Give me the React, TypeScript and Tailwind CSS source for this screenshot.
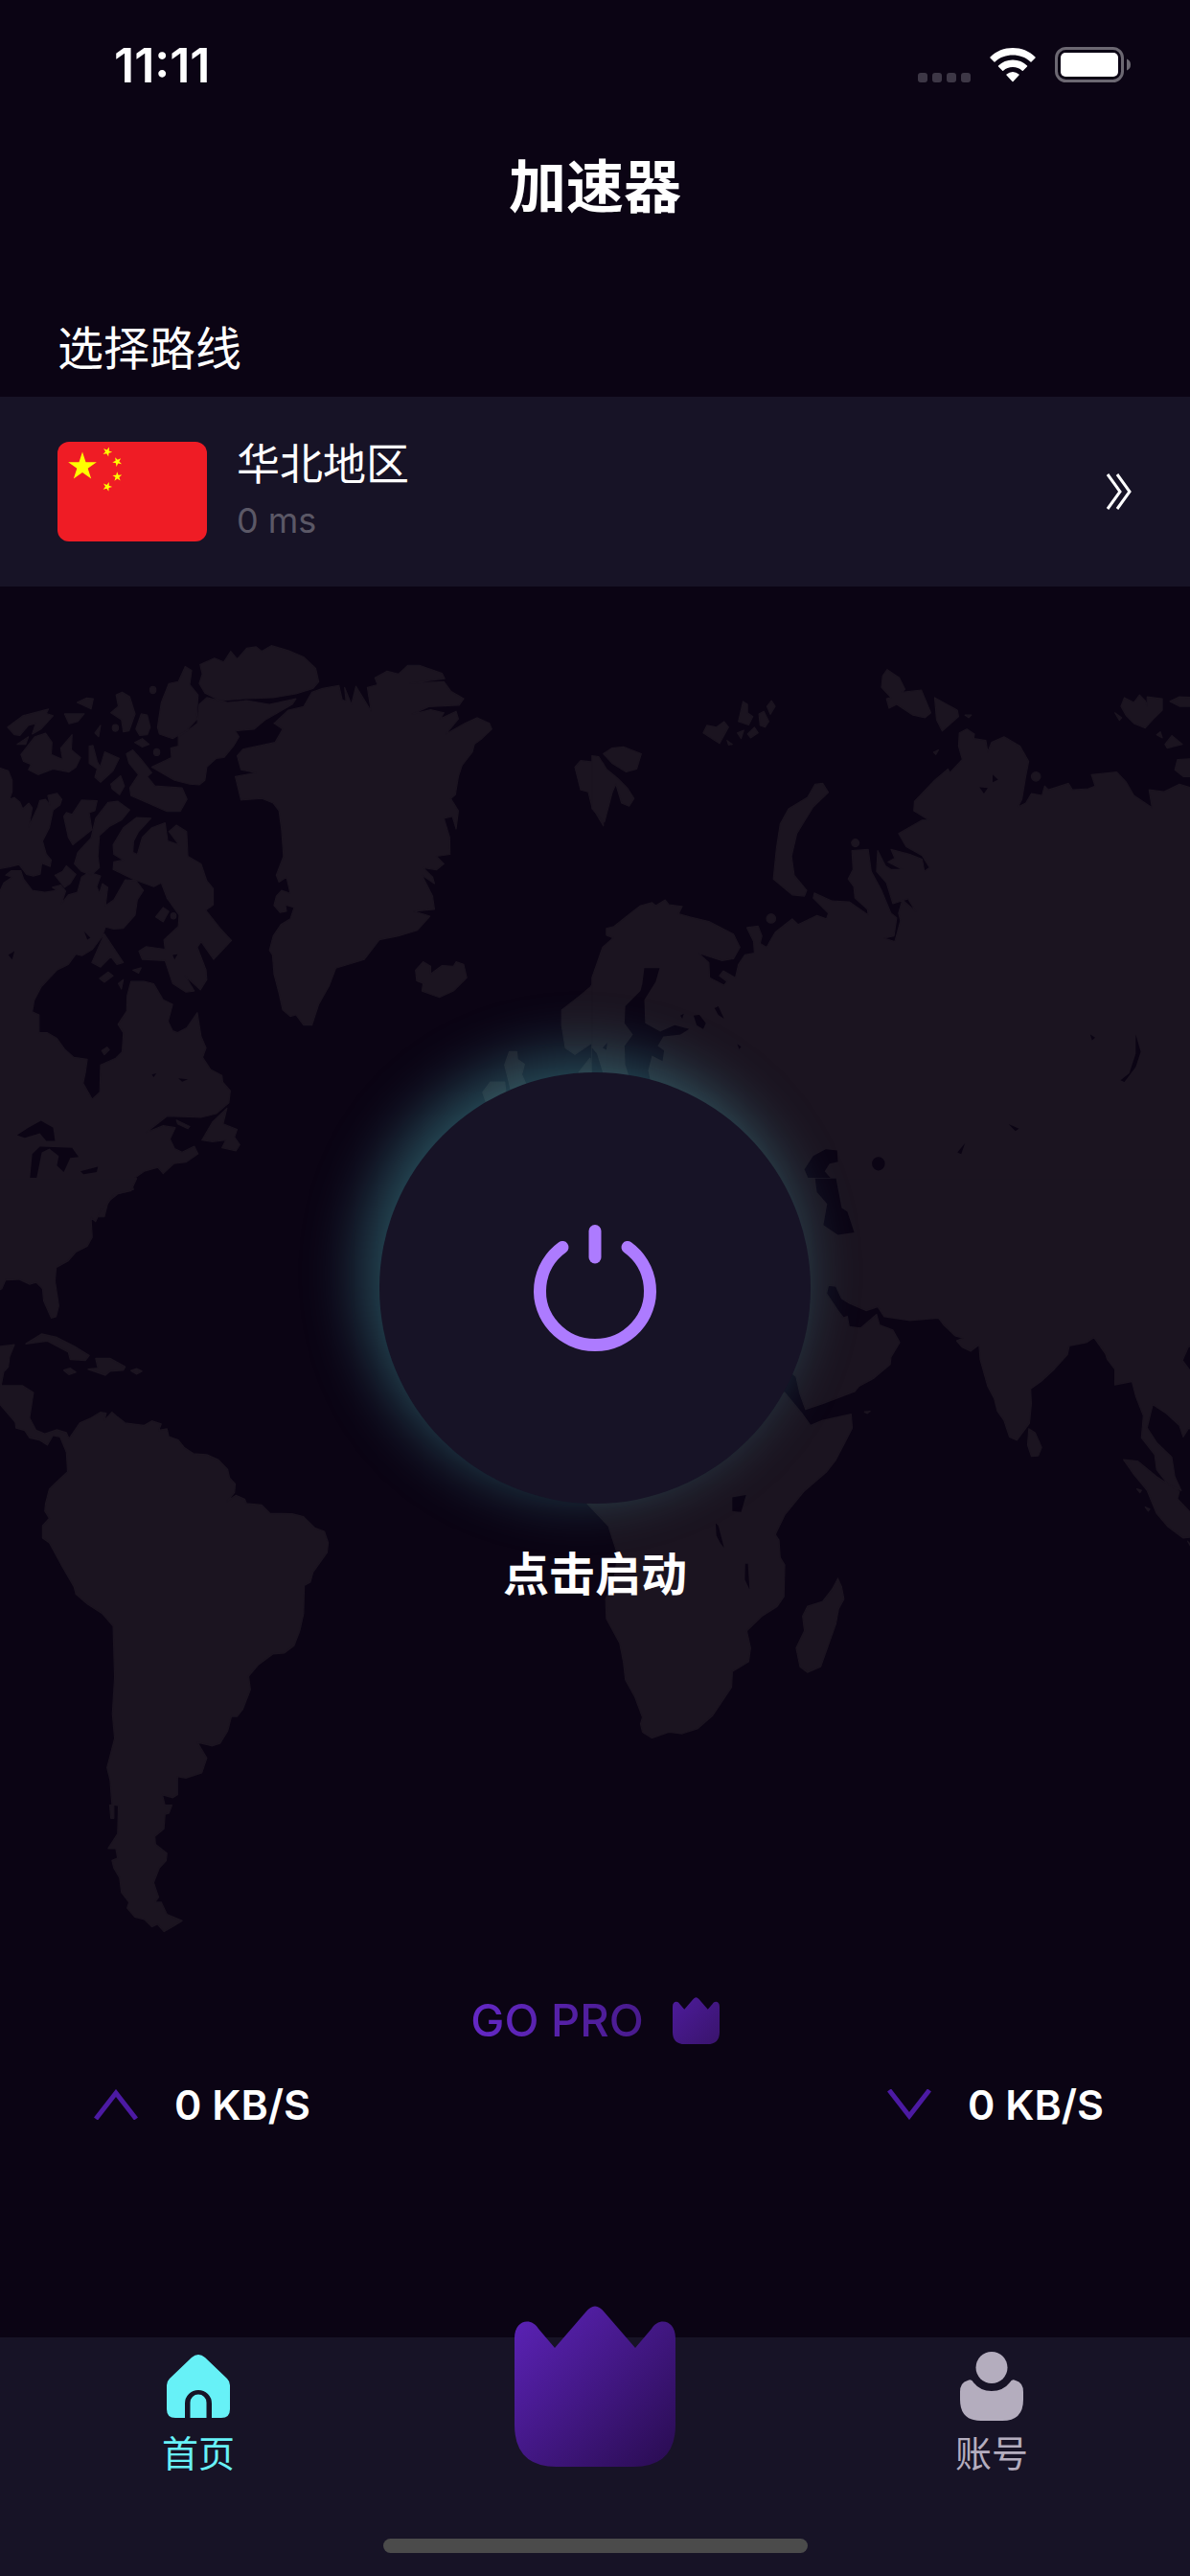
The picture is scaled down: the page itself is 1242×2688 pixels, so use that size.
import React from "react";

const LAND = "#1b1420";
const SEA = "#0b0414";

function starPoints(cx: number, cy: number, r: number, turn: number) {
  return Array.from({ length: 10 }, (_, i) => {
    const radius = i % 2 === 0 ? r : r * 0.382;
    const a = turn + (i * Math.PI) / 5;
    return `${(cx + radius * Math.sin(a)).toFixed(2)},${(cy - radius * Math.cos(a)).toFixed(2)}`;
  }).join(" ");
}

const SMALL_STARS = [
  { x: 52, y: 10.4 },
  { x: 62.4, y: 20.8 },
  { x: 62.4, y: 36.4 },
  { x: 52, y: 46.8 },
];

function Flag() {
  return (
    <svg viewBox="0 0 156 104" className="h-[104px] w-[156px] shrink-0 rounded-xl" aria-hidden="true">
      <rect width="156" height="104" fill="#ef1c25" />
      <polygon points={starPoints(26, 26, 15.6, 0)} fill="#ffff00" />
      {SMALL_STARS.map((s) => (
        <polygon
          key={s.y}
          points={starPoints(s.x, s.y, 5.2, Math.atan2(26 - s.x, s.y - 26))}
          fill="#ffff00"
        />
      ))}
    </svg>
  );
}

const NORTH_WEST_LAND = [
  "M-8 405 L22 415 32 440 32 470 25 490 38 485 52 497 60 515 76 500 85 512 76 562 100 510 105 493 120 490 132 505 126 480 150 474 163 490 158 505 140 518 130 565 112 600 122 635 135 650 132 667 110 658 106 687 88 692 70 688 50 662 25 668 -8 674Z",
  "M-8 748 L10 710 32 695 15 690 30 678 55 678 62 700 85 730 118 735 150 730 138 722 160 716 173 732 162 765 180 742 204 735 215 695 235 682 265 692 255 720 262 738 270 712 284 722 278 770 300 755 330 702 358 704 378 730 362 755 356 795 325 830 300 832 278 826 270 850 244 885 216 902 200 898 180 925 150 940 108 985 90 1020 85 1050 103 1058 103 1105 125 1105 150 1120 170 1148 195 1170 230 1175 225 1210 219 1238 243 1280 263 1262 265 1190 305 1172 322 1155 325 1105 311 1083 334 1048 335 1008 345 970 380 970 405 976 430 1018 455 1030 443 1075 455 1100 468 1105 492 1092 520 1052 530 1115 543 1145 534 1170 555 1202 585 1218 587 1235 607 1258 603 1290 570 1318 530 1328 440 1325 385 1368 430 1350 462 1355 448 1385 460 1410 480 1420 512 1404 522 1424 490 1446 458 1450 430 1476 416 1460 380 1470 352 1490 345 1500 352 1518 310 1530 285 1550 275 1590 L-8 1590Z",
  "M20 300 L60 270 128 252 122 264 140 270 108 305 85 318 94 290 75 295 52 322 38 320Z",
  "M45 345 L75 325 68 345Z",
  "M55 372 L92 325 120 316 137 340 135 372 165 385 160 355 190 320 188 360 212 380 200 405 182 418 140 410 100 425 75 412 82 398 62 390Z",
  "M170 265 L222 265 205 285 182 291Z M203 235 L228 223 246 225 240 252Z",
  "M292 262 L312 245 306 215 322 208 342 220 356 265 340 310 325 312 320 280Z",
  "M358 305 L372 265 388 268 396 300 388 320 368 322Z M355 340 L375 330 393 345 375 352Z M250 315 L265 295 260 325Z",
  "M395 202 a8 9 0 1 0 16 0 a8 9 0 1 0 -16 0Z M405 366 a8 9 0 1 0 16 0 a8 9 0 1 0 -16 0Z M296 302 a8 9 0 1 0 16 0 a8 9 0 1 0 -16 0Z",
  "M235 350 L245 348 256 390 264 405 276 365 314 382 298 415 265 445 250 432 256 410 235 395Z",
  "M292 450 L318 428 328 455 315 478 295 462Z",
  "M415 300 L425 235 445 185 470 180 488 140 505 150 500 188 522 215 518 280 490 310 455 330 420 318Z",
  "M333 370 L350 360 372 385 400 420 388 430 408 455 480 460 493 490 475 522 440 522 390 500 345 480 342 460 365 425 340 395Z",
  "M400 405 L452 380 450 355 470 350 470 325 500 305 520 290 525 240 545 222 600 235 650 230 710 240 780 225 770 240 700 280 670 305 620 310 630 325 615 350 590 380 570 382 545 405 540 440 525 452 500 450 460 440Z",
  "M527 135 L565 118 590 128 608 100 625 120 650 92 675 88 690 100 715 85 760 98 800 115 832 145 840 180 825 198 780 212 720 222 640 225 580 230 540 210 525 185 533 160Z",
  "M168 535 L175 525 190 530 215 492 256 494 250 520 235 525 242 570 192 610 180 590Z",
  "M252 540 L285 498 310 495 342 518 320 545 288 562 262 585 258 640 262 670 240 690 215 680 196 660 205 630 240 592Z",
  "M145 690 L165 680 175 665 200 688 185 712 170 722Z",
  "M298 610 L325 565 360 538 398 540 365 575 352 600 350 630 362 635 375 590 400 565 435 552 442 600 472 610 445 575 465 558 492 575 495 640 530 660 545 705 562 725 562 768 542 782 580 830 610 862 563 912 530 865 520 880 543 940 545 965 528 992 488 955 512 995 490 998 455 975 435 915 375 912 366 890 385 878 435 885 432 860 470 825 472 795 440 750 425 710 405 720 350 700 298 675 300 655 325 650 300 635Z",
  "M410 800 L430 775 445 785 430 813Z M450 797 a7 8 0 1 0 14 0 a7 8 0 1 0 -14 0Z",
  "M242 920 L275 845 325 920 308 925 292 905 265 932Z M262 962 L285 945 298 955 275 972Z M312 975 L325 965 320 990Z",
  "M268 1152 L282 1143 288 1150 275 1163Z M350 940 L372 934 365 948Z",
  "M532 1388 L560 1340 598 1304 588 1345 625 1360 618 1380 632 1400 622 1416 585 1408 595 1388 560 1392Z",
  "M465 1335 L500 1352 495 1358 468 1345Z",
  "M722 290 L760 255 800 246 822 208 850 198 893 190 902 228 912 232 908 195 926 240 938 192 978 258 968 195 995 188 988 170 1020 152 1050 160 1075 137 1105 137 1165 158 1172 172 1080 184 1170 180 1188 205 1222 225 1210 242 1130 246 1085 266 1135 254 1170 262 1160 278 1202 258 1208 278 1175 318 1225 290 1258 275 1290 290 1296 305 1270 330 1250 345 1245 365 1218 400 1208 430 1200 478 1188 488 1208 520 1202 568 1192 535 1170 540 1185 590 1186 635 1150 640 1170 660 1150 676 1115 670 1140 695 1145 712 1112 690 1140 745 1145 780 1090 785 1133 798 1100 835 1050 850 1000 860 960 912 885 935 868 980 840 1030 822 1085 800 1085 780 1058 765 1062 745 1045 735 1000 722 950 718 900 710 888 720 850 740 820 765 805 775 775 752 768 755 785 738 788 722 770 728 745 742 730 765 738 755 695 735 708 728 690 747 640 742 570 735 520 720 500 690 488 635 492 620 430 675 420 635 412 625 375 640 358 725 340 745 305Z",
  "M1095 940 L1115 918 1135 930 1135 950 1165 928 1195 930 1202 918 1222 925 1230 960 1195 995 1158 1012 1112 995 1115 975 1098 968Z",
  "M1515 405 L1530 388 1590 395 L1590 560 1560 510 1550 470 1530 465Z",
  "M1590 940 L1555 985 1528 1008 1480 1045 1480 1085 1490 1145 1515 1162 1555 1135 1590 1120Z",
  "M1330 1190 L1342 1155 1362 1155 1364 1175 1382 1188 1375 1215 1390 1250 1350 1270Z M1272 1262 L1292 1235 1330 1235 1335 1280 1285 1300Z",
  "M1525 1210 L1555 1172 1560 1212Z",
].join(" ");

const NORTH_WEST_WATER = [
  "M45 1375 L75 1355 108 1337 140 1355 145 1390 122 1390 105 1370 65 1382Z",
  "M78 1500 L85 1425 105 1405 190 1408 207 1432 185 1435 168 1472 150 1455 155 1430 130 1410 110 1420 95 1495Z",
  "M212 1470 L258 1458 255 1472 220 1478Z M150 1510 L175 1495 208 1492 180 1510Z",
  "M22 900 L38 890 32 912Z M222 838 L238 855 230 860Z M470 1225 L495 1228 480 1234Z M455 900 L468 898 460 912Z M400 1215 L412 1212 405 1222Z",
].join(" ");

const NORTH_EAST_LAND = [
  "M-8 375 L10 378 30 410 60 435 85 460 103 488 90 508 70 500 55 450 46 470 25 550 -8 515Z",
  "M22 370 L45 355 75 352 122 370 110 410 82 418 45 395Z",
  "M285 315 L295 295 320 300 340 285 352 300 328 343Z M378 285 L390 232 402 240 402 262 416 272 405 294Z M432 265 L445 258 458 285 448 300 435 295Z M453 245 L465 230 475 245 462 266Z M402 318 L420 300 430 315 410 328Z M375 315 L392 308 385 330Z M348 335 L362 345 352 347Z",
  "M755 195 L758 165 770 148 802 170 817 200 808 208 860 202 885 262 870 275 838 268 795 240 775 250 768 225 780 222Z",
  "M895 222 L955 255 958 272 915 310 900 280Z M975 268 L992 268 985 275Z",
  "M470 700 L478 620 488 555 510 515 560 485 580 450 600 448 615 472 575 510 532 580 518 640 525 690 558 730 552 745 520 742Z",
  "M676 605 a10 10 0 1 0 20 0 a10 10 0 1 0 -20 0Z M452 804 a12 12 0 1 0 24 0 a12 12 0 1 0 -24 0Z M1150 430 a12 12 0 1 0 24 0 a12 12 0 1 0 -24 0Z M892 366 L905 360 898 372Z",
  "M-8 1590 L-8 960 20 880 48 855 30 848 30 830 50 825 100 785 120 770 150 762 160 770 185 755 195 768 230 772 220 792 250 800 300 812 365 845 382 880 365 910 335 915 272 895 300 920 302 960 340 980 348 970 328 955 338 942 370 960 378 925 395 900 420 895 418 865 400 828 430 824 440 850 435 870 452 880 475 840 520 805 535 820 560 808 585 796 610 805 615 790 575 750 578 737 625 758 670 760 720 795 718 780 685 750 682 720 667 700 680 675 677 625 720 622 728 680 755 730 780 790 795 802 788 850 762 856 790 865 805 810 800 790 810 755 845 785 825 752 785 765 768 710 742 680 745 625 765 665 780 675 810 675 772 655 790 645 780 622 830 635 862 648 868 680 882 670 862 638 820 615 800 580 862 545 880 545 840 520 842 495 895 440 930 410 935 420 968 385 958 350 960 315 980 305 1000 318 998 330 1030 335 1035 365 1045 340 1078 325 1120 350 1143 390 1135 430 1125 490 1115 510 1135 500 1150 475 1178 480 1185 455 1195 465 1248 448 1258 465 1300 462 1318 455 1308 425 1375 418 1400 445 1420 480 1468 512 1460 465 1500 470 1540 450 1590 465 1590 1590Z",
  "M1370 262 L1388 275 1382 282Z M1386 245 L1395 222 1420 235 1435 215 1450 230 1455 245 1455 220 1495 225 1495 255 1470 280 1450 302 1420 290 1400 270Z M1515 232 L1540 220 1590 222 1590 245 1540 245Z M1502 345 L1520 322 1548 345 1508 355Z M1480 320 L1490 312 1495 328Z M1528 412 L1535 385 1590 382 1590 430 1550 430Z",
].join(" ");

const NORTH_EAST_WATER = [
  "M125 975 L130 935 170 935 160 970 130 1018 132 1080 172 1102 210 1085 248 1095 225 1110 180 1115 165 1140 182 1152 178 1180 150 1165 140 1205 148 1240 90 1220 80 1190 78 1140 100 1110 78 1080 80 1035 120 995Z",
  "M-8 1145 L5 1160 22 1215 -8 1215Z",
  "M20 1145 L32 1132 30 1150Z M260 1060 L275 1058 292 1080 285 1095 268 1085Z M315 1040 L325 1035 340 1068 325 1058Z M375 1135 L385 1142 380 1148Z M225 1060 L234 1055 230 1068Z",
  "M552 1465 L575 1430 608 1412 638 1415 640 1445 618 1450 605 1470 645 1515 655 1590 620 1590 580 1530Z",
  "M730 1450 a17 18 0 1 0 34 0 a17 18 0 1 0 -34 0Z M955 1420 L975 1396 965 1425Z M1090 1346 L1117 1358 1108 1364Z",
  "M1425 1110 L1438 1155 1425 1195 1395 1235 1385 1230 1408 1212 1425 1160Z",
  "M1013 458 L1035 460 1025 475Z M1048 425 L1062 438 1048 445Z M1305 1110 L1318 1118 1310 1125Z",
].join(" ");

const SOUTH_WEST_LAND = [
  "M-8 -20 L360 -20 345 5 300 12 285 30 265 45 252 68 240 60 243 100 230 118 200 130 180 148 148 162 145 190 155 240 148 262 135 265 115 230 112 205 95 192 78 196 50 186 15 187 5 205 -8 210Z",
  "M68 318 L110 298 150 305 200 325 235 342 225 352 185 350 180 335 125 312Z",
  "M232 370 L258 368 252 348 290 348 330 365 325 372 290 374 278 382Z M168 372 L185 368 200 376 182 381Z M345 373 L360 369 374 374 360 380Z",
  "M-8 324 L38 320 25 345 22 365 10 375 3 404 60 404 88 418 78 470 95 495 118 502 150 494 175 500 182 512 210 480 240 470 265 458 280 460 275 475 295 458 310 468 330 480 380 485 400 476 425 482 418 495 440 492 445 508 470 515 485 530 510 543 545 545 575 555 600 575 605 592 620 605 618 622 598 640 622 628 645 636 650 645 690 648 712 665 770 666 800 672 830 695 855 702 865 725 862 745 825 785 818 805 802 812 800 870 790 905 775 935 750 950 720 952 680 975 655 998 660 1025 640 1065 625 1080 610 1080 600 1110 580 1135 560 1140 520 1133 545 1165 532 1195 490 1206 468 1203 468 1240 455 1246 428 1240 435 1262 453 1262 445 1278 435 1280 432 1310 408 1325 410 1342 440 1360 438 1375 420 1390 405 1420 418 1450 408 1460 425 1460 440 1485 480 1498 455 1510 432 1520 415 1505 400 1510 380 1495 355 1490 335 1472 340 1460 320 1440 315 1410 300 1390 295 1375 310 1370 305 1350 285 1350 310 1320 312 1262 295 1260 290 1210 282 1185 302 1125 296 1075 302 1000 298 895 270 870 230 850 200 830 195 815 165 775 130 725 112 715 112 690 130 675 118 660 120 645 130 615 150 600 178 580 175 540 158 508 140 505 125 525 105 515 78 510 65 495 42 490 40 478 -8 435Z",
  "M289 1262 L300 1262 300 1288 292 1288Z",
].join(" ");

const SOUTH_EAST_LAND = [
  "M-30 -20 L1590 -20 1590 340 1565 322 1548 352 1590 395 1590 505 1565 490 1550 508 1540 485 1505 460 1470 442 1455 490 1480 520 1520 550 1528 590 1545 618 1510 605 1480 575 1475 545 1440 510 1445 465 1425 425 1415 395 1370 402 1370 370 1350 350 1345 338 1315 305 1295 315 1250 322 1245 340 1210 370 1175 395 1148 410 1150 440 1145 480 1112 515 1092 508 1078 475 1060 455 1052 430 1035 405 1015 350 1012 320 990 333 968 325 953 312 970 306 950 302 920 280 905 265 830 270 762 262 745 242 715 250 670 235 650 225 635 200 615 198 610 215 640 250 655 265 665 262 670 283 700 286 742 258 750 280 785 290 803 315 780 345 778 360 735 388 695 405 685 415 600 440 555 452 540 420 530 385 400 300 300 300 300 400 500 418 545 460 568 485 600 475 675 462 678 490 655 525 635 555 610 580 550 620 500 668 475 708 485 720 488 755 500 770 498 835 480 855 440 875 400 905 410 940 405 968 362 988 360 1020 330 1055 310 1078 270 1105 230 1115 195 1112 150 1124 125 1112 120 1095 125 1082 105 1040 80 1005 75 970 65 930 30 880 28 840 50 800 60 750 35 690 -20 645Z",
  "M1143 492 L1160 500 1177 530 1168 547 1150 548 1140 525Z",
  "M640 798 L650 815 656 840 642 860 635 890 595 978 560 990 540 978 530 940 552 905 547 875 560 855 600 845 625 820Z",
  "M1393 555 L1430 558 1480 590 1540 620 1535 635 1590 680 1590 712 1550 715 1510 692 1480 665 1455 618 1420 585Z",
  "M710 457 L725 456 718 460Z M1450 652 L1462 656 1458 660Z M1428 615 L1440 618 1436 622Z M1562 722 L1590 745 1590 760Z",
].join(" ");

const SOUTH_EAST_WATER = [
  "M580 -20 L635 -20 650 40 665 48 683 90 640 95 602 75 612 32 585 8Z",
  "M362 632 L398 627 385 662 362 660Z M318 685 L325 690 340 735 330 725 320 710Z M396 768 L403 768 407 820 395 800Z",
].join(" ");

function WorldMap() {
  return (
    <svg
      viewBox="0 612 1242 1827"
      preserveAspectRatio="xMidYMin slice"
      className="absolute inset-0 h-full w-full"
      aria-hidden="true"
    >
      <g transform="translate(0 640) scale(0.39605)">
        <path d={NORTH_WEST_LAND} fill={LAND} stroke={LAND} strokeWidth="3" strokeLinejoin="round" />
        <path d={NORTH_WEST_WATER} fill={SEA} />
      </g>
      <g transform="translate(621 640) scale(0.39605)">
        <path d={NORTH_EAST_LAND} fill={LAND} stroke={LAND} strokeWidth="3" strokeLinejoin="round" />
        <path d={NORTH_EAST_WATER} fill={SEA} />
      </g>
      <g transform="translate(0 1240) scale(0.39605 0.5102)">
        <path d={SOUTH_WEST_LAND} fill={LAND} stroke={LAND} strokeWidth="3" strokeLinejoin="round" />
      </g>
      <g transform="translate(621 1240) scale(0.39605 0.5102)">
        <path d={SOUTH_EAST_LAND} fill={LAND} stroke={LAND} strokeWidth="3" strokeLinejoin="round" />
        <path d={SOUTH_EAST_WATER} fill={SEA} />
      </g>
    </svg>
  );
}

function Crown({ id, from, to, className }: { id: string; from: string; to: string; className: string }) {
  return (
    <svg viewBox="0 0 168 168" className={className} aria-hidden="true">
      <defs>
        <linearGradient id={id} x1="0" y1="0" x2="1" y2="1">
          <stop offset="0.05" stopColor={from} />
          <stop offset="0.95" stopColor={to} />
        </linearGradient>
      </defs>
      <path
        d="M0 34 C0 14 18 12 25 24 L42 44 L74 7 Q84 -6 94 7 L126 44 L143 24 C150 12 168 14 168 34 V124 Q168 168 124 168 H44 Q0 168 0 124Z"
        fill={`url(#${id})`}
      />
    </svg>
  );
}

function StatusBar() {
  return (
    <div className="flex h-[132px] items-center justify-between pt-1 pr-[62px] pl-[119px]">
      <span className="text-[50px] leading-14 font-semibold">11:11</span>
      <div className="flex items-center gap-5">
        <svg viewBox="0 0 55 38" className="h-[38px] w-[55px]" fill="#3d3746" aria-hidden="true">
          <rect x="0" y="27" width="10" height="10" rx="3" />
          <rect x="15" y="27" width="10" height="10" rx="3" />
          <rect x="30" y="27" width="10" height="10" rx="3" />
          <rect x="45" y="27" width="10" height="10" rx="3" />
        </svg>
        <svg viewBox="0 0 48 38" className="h-[38px] w-12" fill="#fff" aria-label="Wi-Fi" role="img">
          <path d="M24 1 C33 1 41 4 47.500 10.500 Q48 11 47.500 11.500 L43.500 15.500 Q43 16 42.500 15.500 C37 10.500 31 8.500 24 8.500 C17 8.500 11 10.500 5.500 15.500 Q5 16 4.500 15.500 L0.500 11.500 Q0 11 0.500 10.500 C7 4 15 1 24 1Z" />
          <path d="M24 13.500 C30 13.500 35 15.500 39 19.500 Q39.500 20 39 20.500 L34.800 24.700 Q34.300 25.200 33.800 24.700 C31 22.200 28 21 24 21 C20 21 17 22.200 14.200 24.700 Q13.700 25.200 13.200 24.700 L9 20.500 Q8.500 20 9 19.500 C13 15.500 18 13.500 24 13.500Z" />
          <path d="M24 26 Q27.500 26 30.500 28.600 Q31 29.100 30.500 29.600 L24.500 36 Q24 36.500 23.500 36 L17.500 29.600 Q17 29.100 17.500 28.600 Q20.500 26 24 26Z" />
        </svg>
        <svg viewBox="0 0 79 38" className="h-[38px] w-[79px]" aria-label="电池" role="img">
          <rect x="1.500" y="1.500" width="69" height="34" rx="10" fill="none" stroke="#6c6872" strokeWidth="3" />
          <rect x="6" y="6" width="60" height="25" rx="5" fill="#fff" />
          <path d="M75 12.500 Q79 14 79 18.500 Q79 23 75 24.500Z" fill="#6c6872" />
        </svg>
      </div>
    </div>
  );
}

function Speed({ label, d }: { label: string; d: string }) {
  return (
    <div className="flex items-center justify-center gap-[38px] pl-2">
      <svg viewBox="0 0 46 32" className="h-8 w-[46px]" role="img" aria-label={label}>
        <path d={d} fill="none" stroke="#4c1aa3" strokeWidth="5" />
      </svg>
      <span className="text-[43px] leading-14 font-semibold whitespace-nowrap">0 KB/S</span>
    </div>
  );
}

export default function App() {
  return (
    <div className="flex min-h-screen flex-col bg-[#0b0414] font-['Inter','Noto_Sans_CJK_SC',sans-serif] text-white">
      <header>
        <StatusBar />
        <h1 className="flex h-[126px] items-center justify-center text-[60px] font-bold">加速器</h1>
      </header>

      <section>
        <h2 className="px-15 pt-[78px] pb-[22px] text-[48px] leading-14">选择路线</h2>
        <button type="button" className="flex w-full items-center bg-[#171326] py-[39px] pr-[60px] pl-15 text-left">
          <Flag />
          <span className="ml-[31px] flex flex-1 flex-col pt-1">
            <span className="text-[45px] leading-14">华北地区</span>
            <span className="text-[36px] leading-15 text-[#5b5866]">0 ms</span>
          </span>
          <svg viewBox="0 0 28 40" className="h-10 w-7" fill="none" stroke="#fff" strokeWidth="3" aria-hidden="true">
            <path d="M2 2 L15 20 L2 38 M12 2 L25 20 L12 38" />
          </svg>
        </button>
      </section>

      <main className="relative flex flex-1 flex-col overflow-hidden pb-[215px]">
        <WorldMap />
        <div className="relative flex flex-1 flex-col items-center pt-[507px]">
          <button
            type="button"
            aria-labelledby="start-label"
            className="flex size-[450px] items-center justify-center rounded-full bg-[#171326] shadow-[-15px_-15px_65px_rgba(103,240,245,0.34)]"
          >
            <svg viewBox="0 0 130 130" className="size-[130px] overflow-visible" fill="none" stroke="#ad7bff" strokeLinecap="round" strokeWidth="13" aria-hidden="true">
              <path d="M31 22.500 A57.500 56.500 0 1 0 99 22.500" />
              <path d="M65 5.500 V33" />
            </svg>
          </button>
          <p id="start-label" className="mt-[46px] text-[48px] leading-14 font-bold">
            点击启动
          </p>
        </div>
        <button type="button" className="relative flex items-center gap-[30px] self-center">
          <span className="bg-linear-to-r from-[#6428c6] to-[#481a8c] bg-clip-text text-[47px] leading-14 font-medium text-transparent">
            GO PRO
          </span>
          <Crown id="crown-small" from="#4c1b99" to="#3a146e" className="size-[49px]" />
        </button>
        <div className="relative mt-8 grid grid-cols-3">
          <Speed label="上传" d="M2 31 L23 4 L44 31" />
          <span />
          <Speed label="下载" d="M2 1 L23 28 L44 1" />
        </div>
      </main>

      <nav className="relative bg-[#171326] pb-6">
        <div className="grid grid-cols-3">
          <a href="#home" className="flex flex-col items-center gap-3 pt-[15px] text-[#67f1f7]" aria-current="page">
            <svg viewBox="0 0 72 72" className="size-[72px]" fill="currentColor" aria-hidden="true">
              <path d="M29 6 Q36 0 43 6 L66 28 Q69 31 69 35 V60 Q69 69 60 69 H50 V54 A14 14 0 0 0 22 54 V69 H12 Q3 69 3 60 V35 Q3 31 6 28Z" />
              <path d="M27.500 69 V53 A8.500 8.500 0 0 1 44.500 53 V69Z" />
            </svg>
            <span className="text-[38px] leading-11">首页</span>
          </a>
          <a href="#pro" aria-label="PRO" className="-mt-[33px] size-[168px] justify-self-center">
            <Crown id="crown-large" from="#5a22b4" to="#2b0d55" className="size-[168px]" />
          </a>
          <a href="#account" className="flex flex-col items-center gap-3 pt-[15px] text-[#b4adbe]">
            <svg viewBox="0 0 72 72" className="size-[72px]" fill="currentColor" aria-hidden="true">
              <circle cx="36" cy="16.500" r="16.500" />
              <path d="M11 30 Q15 28 17 32 Q24 41 36 41 Q48 41 55 32 Q57 28 61 30 Q69 32 69 42 V50 Q69 72 47 72 H25 Q3 72 3 50 V42 Q3 32 11 30Z" />
            </svg>
            <span className="text-[38px] leading-11">账号</span>
          </a>
        </div>
        <div className="mx-auto mt-[67px] h-[15px] w-[443px] rounded-full bg-[#4b4b4b]" />
      </nav>
    </div>
  );
}
